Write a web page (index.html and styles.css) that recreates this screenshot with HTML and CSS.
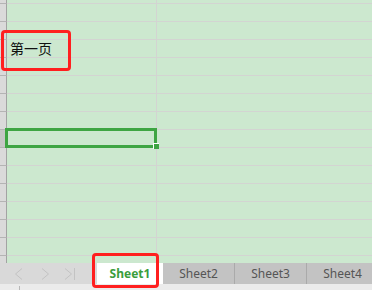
FILE: index.html
```html
<!DOCTYPE html>
<html>
<head>
<meta charset="utf-8">
<link rel="stylesheet" href="styles.css">
</head>
<body>
<div class="app">
  <div class="grid">
    <div class="row top"><div class="rh"></div><div class="c c1"></div><div class="c c2"></div></div>
    <div class="row"><div class="rh"></div><div class="c c1"></div><div class="c c2"></div></div>
    <div class="row"><div class="rh"></div><div class="c c1"></div><div class="c c2"></div></div>
    <div class="row"><div class="rh"></div><div class="c c1 text">第一页</div><div class="c c2"></div></div>
    <div class="row"><div class="rh"></div><div class="c c1"></div><div class="c c2"></div></div>
    <div class="row"><div class="rh"></div><div class="c c1"></div><div class="c c2"></div></div>
    <div class="row"><div class="rh"></div><div class="c c1"></div><div class="c c2"></div></div>
    <div class="row"><div class="rh"></div><div class="c c1"></div><div class="c c2"></div></div>
    <div class="row sel"><div class="rh"></div><div class="c c1"></div><div class="c c2"></div></div>
    <div class="row"><div class="rh"></div><div class="c c1"></div><div class="c c2"></div></div>
    <div class="row"><div class="rh"></div><div class="c c1"></div><div class="c c2"></div></div>
    <div class="row"><div class="rh"></div><div class="c c1"></div><div class="c c2"></div></div>
    <div class="row"><div class="rh"></div><div class="c c1"></div><div class="c c2"></div></div>
    <div class="row"><div class="rh"></div><div class="c c1"></div><div class="c c2"></div></div>
    <div class="row"><div class="rh"></div><div class="c c1"></div><div class="c c2"></div></div>
    <div class="row last"><div class="rh"></div><div class="c c1"></div><div class="c c2"></div></div>
    <div class="cellbox"><span class="handle"></span></div>
    <div class="mark mark-a"></div>
  </div>
  <div class="tabbar">
    <div class="nav">
      <svg width="97" height="21" viewBox="0 0 97 21">
        <g fill="none" stroke="#c3c3c3" stroke-width="1">
          <path d="M22 5.5 L15.5 11 L22 16.5"/>
          <path d="M42 5.5 L48.5 11 L42 16.5"/>
          <path d="M65 5.5 L71.5 11 L65 16.5"/>
          <path d="M74.5 5 L74.5 17"/>
        </g>
      </svg>
    </div>
    <div class="tab active">Sheet1</div>
    <div class="tab">Sheet2</div>
    <div class="tab">Sheet3</div>
    <div class="tab">Sheet4</div>
  </div>
  <div class="status"><span class="tick"></span></div>
  <div class="mark mark-b"></div>
</div>
</body>
</html>
```
FILE: styles.css
```css
html, body {
  margin: 0;
  padding: 0;
}
body {
  width: 372px;
  height: 290px;
  overflow: hidden;
  background: #ebebeb;
  font-family: "Noto Sans", "Noto Sans CJK SC", sans-serif;
}
.app {
  position: relative;
  width: 372px;
  height: 290px;
  display: flex;
  flex-direction: column;
}
.grid {
  position: relative;
  height: 263px;
  display: flex;
  flex-direction: column;
  overflow: hidden;
  background: #cce8cf;
}
.row {
  display: flex;
  height: 18px;
  flex: none;
}
.row.top { height: 4px; }
.row.last { height: 7px; }
.row > div {
  box-sizing: border-box;
  height: 100%;
  border-bottom: 1px solid #d3d4d2;
}
.row.last > div { border-bottom: none; }
.rh {
  width: 7px;
  flex: none;
  background: #dadada;
  border-right: 1px solid #a3a3a3;
  border-bottom-color: #b4b4b4 !important;
}
.row.sel .rh { background: #c6c6c6; }
.c1 {
  width: 150px;
  flex: none;
  border-right: 1px solid #d3d4d2;
}
.c2 { flex: 1; }
.text {
  padding-left: 3px;
  font-family: "Noto Sans CJK SC", sans-serif;
  font-size: 14px;
  line-height: 17px;
  color: #111;
}
.cellbox {
  position: absolute;
  left: 5px;
  top: 128px;
  width: 152px;
  height: 20px;
  box-sizing: border-box;
  border: 3px solid #3ea543;
}
.handle {
  position: absolute;
  right: -5px;
  bottom: -4px;
  width: 5px;
  height: 5px;
  background: #3ea543;
  border-left: 1px solid #fff;
  border-top: 1px solid #fff;
}
.mark {
  position: absolute;
  box-sizing: border-box;
  border: 3px solid #ff1f1f;
  border-radius: 4px;
}
.mark-a {
  left: 1px;
  top: 30px;
  width: 70px;
  height: 41px;
}
.mark-b {
  left: 92px;
  top: 253px;
  width: 67px;
  height: 35px;
}
.tabbar {
  height: 21px;
  display: flex;
  background: #d9d9d9;
  flex: none;
}
.nav {
  width: 97px;
  flex: none;
}
.nav svg { display: block; }
.tab {
  width: 71px;
  flex: none;
  border-right: 1px solid #aaaaaa;
  background: #c3c3c3;
  color: #555;
  font-size: 12px;
  line-height: 21px;
  text-align: center;
}
.tab.active {
  width: 66px;
  border-right: none;
  background: #fff;
  color: #3a9d3c;
  font-weight: bold;
  height: 23px;
}
.status {
  flex: 1;
  background: #ebebeb;
  position: relative;
}
.tick {
  position: absolute;
  left: 19px;
  top: 2px;
  width: 1px;
  height: 4px;
  background: #b8b8b8;
}
```
